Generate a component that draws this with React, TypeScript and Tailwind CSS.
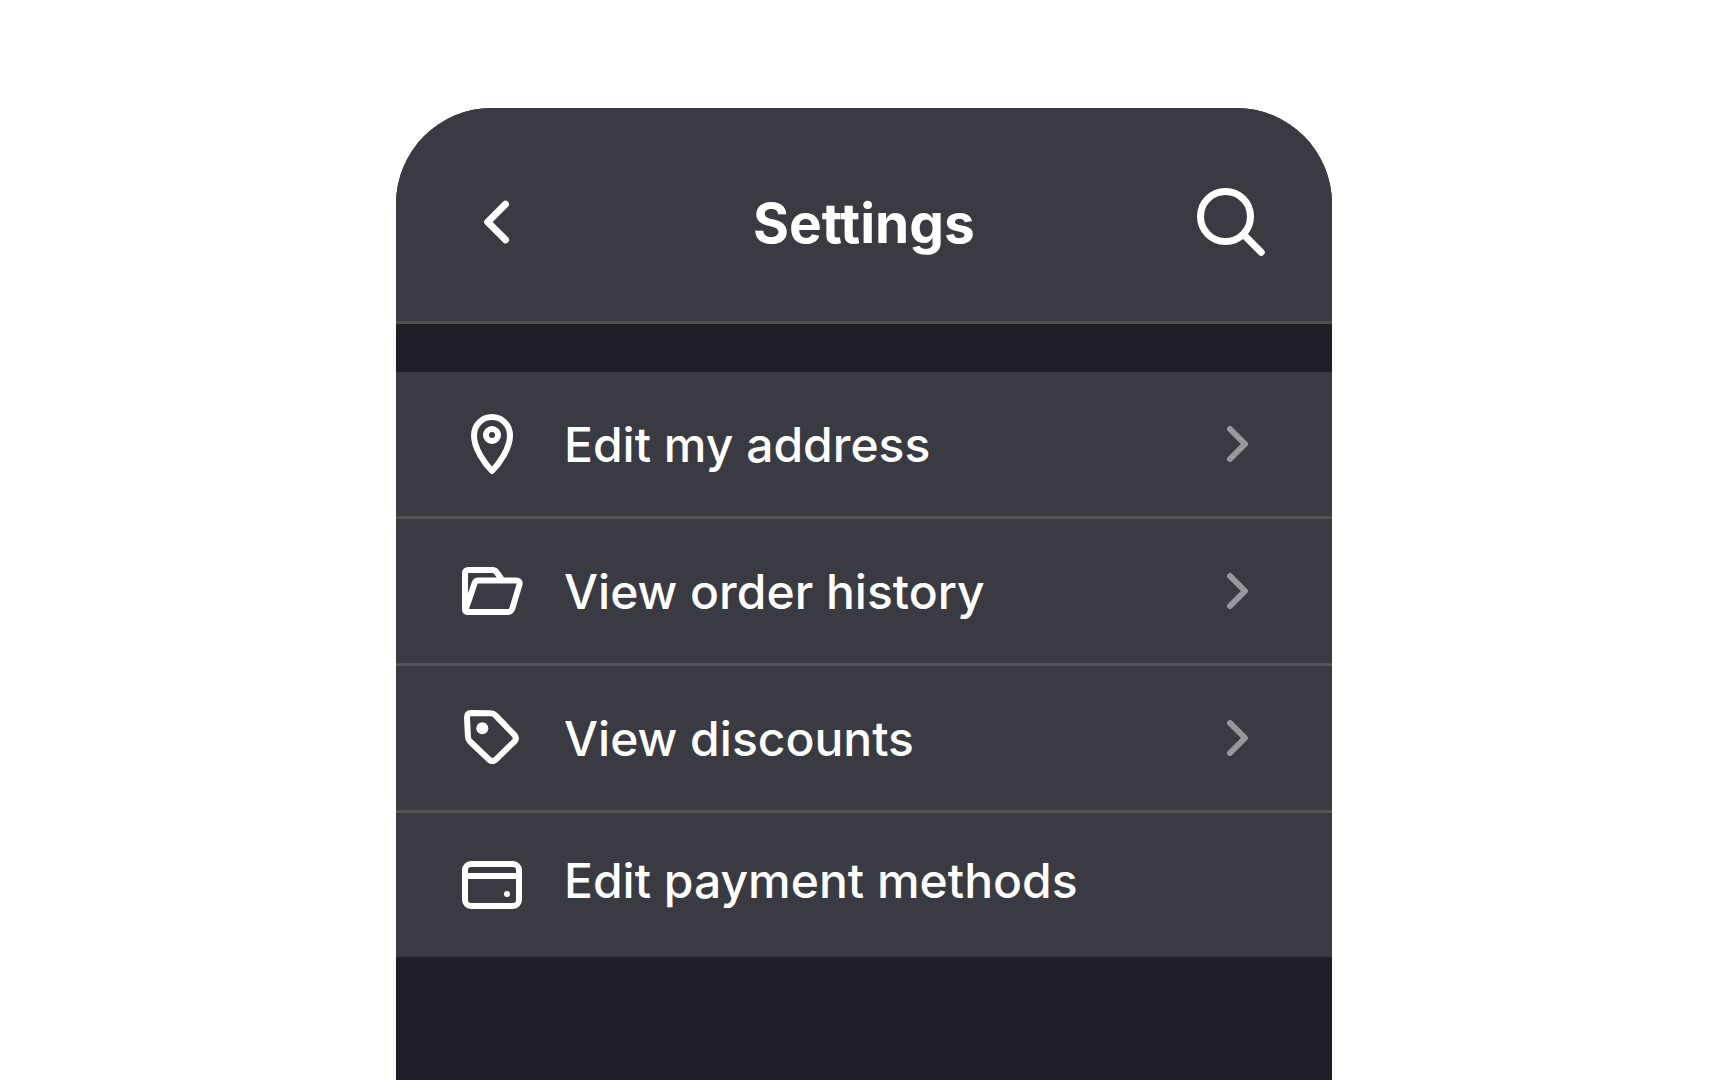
import type { ReactNode } from "react";

function Icon({ children, className = "" }: { children: ReactNode; className?: string }) {
  return (
    <svg
      viewBox="0 0 72 72"
      className={`size-18 shrink-0 ${className}`}
      fill="none"
      stroke="currentColor"
      strokeWidth="6"
      strokeLinecap="round"
      strokeLinejoin="round"
      aria-hidden="true"
    >
      {children}
    </svg>
  );
}

function PinIcon() {
  return (
    <Icon>
      <path d="M36 63C29 56 18 40.500 18 27.500C18 17 26 9 36 9C46 9 54 17 54 27.500C54 40.500 43 56 36 63Z" />
      <circle cx="36" cy="27" r="6" />
    </Icon>
  );
}

function FolderIcon() {
  return (
    <Icon>
      <path d="M9 54V18.500Q9 15 12.500 15H36.500Q39 15 40.500 17L45 23.500" />
      <path d="M9.500 55L18.500 28.500Q19.500 25.500 22.500 25.500H60Q64.500 25.500 63.500 29.500L56.500 53Q55.300 57 51.500 57H12Q9 57 9 54" />
    </Icon>
  );
}

function TagIcon() {
  return (
    <Icon>
      <path d="M15 11L34.500 11.300Q37.500 11.400 39.500 13.400L58.300 32.800Q61.400 36.300 58.300 39.600L40 57.300Q36.500 60.800 33 57.500L14 39.500Q12 37.500 11.900 34.500L11 15.500Q11 11 15 11Z" />
      <circle cx="26.300" cy="26.300" r="6" fill="currentColor" stroke="none" />
    </Icon>
  );
}

function WalletIcon() {
  return (
    <Icon>
      <rect x="9" y="15" width="54" height="42" rx="6" />
      <path d="M10 27H62" />
      <circle cx="51" cy="45" r="3" fill="currentColor" stroke="none" />
    </Icon>
  );
}

const items = [
  { label: "Edit my address", icon: <PinIcon />, chevron: true },
  { label: "View order history", icon: <FolderIcon />, chevron: true },
  { label: "View discounts", icon: <TagIcon />, chevron: true },
  { label: "Edit payment methods", icon: <WalletIcon />, chevron: false },
];

export default function App() {
  return (
    <div className="flex min-h-screen flex-col items-center bg-white px-6 pt-27 font-['Inter',sans-serif] text-white">
      <main className="w-full max-w-[936px] grow overflow-hidden rounded-t-[96px] bg-[#1f1f28]">
        <header className="flex items-center justify-between border-b-3 border-[#505054] bg-[#3a3a42] px-12 pt-[66px] pb-[51px]">
          <button type="button" aria-label="Back">
            <svg viewBox="0 0 96 96" className="size-24" fill="none" stroke="currentColor" strokeWidth="7" strokeLinecap="round" strokeLinejoin="round">
              <path d="M61.500 30.300L43.700 48L61.500 65.700" />
            </svg>
          </button>
          <h1 className="pt-0.5 text-[55px] leading-[72px] font-bold">Settings</h1>
          <button type="button" aria-label="Search">
            <svg viewBox="0 0 96 96" className="size-24" fill="none" stroke="currentColor" strokeWidth="7" strokeLinecap="round">
              <circle cx="37.500" cy="42.500" r="25" />
              <path d="M56 61L73.200 78.200" />
            </svg>
          </button>
        </header>
        <nav aria-label="Settings" className="mt-12">
          <ul className="divide-y-3 divide-[#535358] bg-[#3a3a42]">
            {items.map(({ label, icon, chevron }) => (
              <li key={label}>
                <button type="button" className="flex w-full items-start gap-9 px-15 py-9 text-left">
                  {icon}
                  <span className="flex grow items-center justify-between">
                    <span className="pt-0.5 text-[48px] leading-[60px] font-medium">{label}</span>
                    {chevron && (
                      <Icon className="text-[#98989c]">
                        <path d="M30 21L45 36L30 51" />
                      </Icon>
                    )}
                  </span>
                </button>
              </li>
            ))}
          </ul>
        </nav>
      </main>
    </div>
  );
}
